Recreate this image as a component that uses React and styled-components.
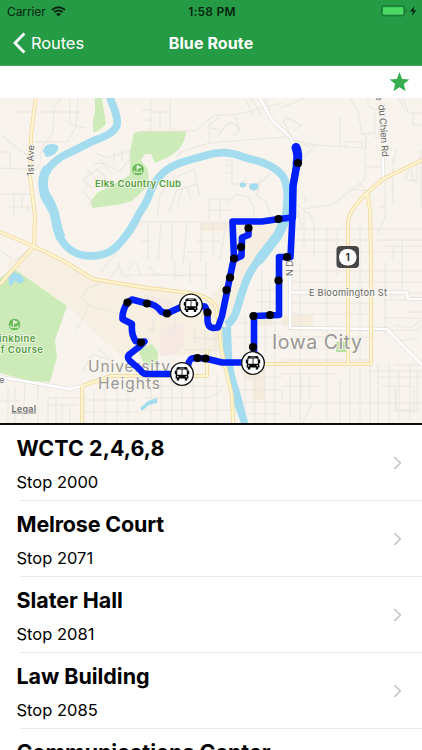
import React from 'react'
import styled, { createGlobalStyle } from 'styled-components'

const GlobalStyle = createGlobalStyle`
    * {
        box-sizing: border-box;
    }
    body {
        margin: 0;
        background-color: #fff;
        font-family: Inter, "Liberation Sans", sans-serif;
        overflow: hidden;
    }
`;

const Container = styled.div`
    width: 422px;
    height: 750px;
    display: flex;
    flex-direction: column;
    overflow: hidden;
    background-color: #fff;
`;

const Header = styled.header`
    height: 66px;
    flex-shrink: 0;
    background-color: #259b46;
    border-bottom: 1px solid #4aa965;
`;

const StatusBar = styled.div`
    height: 22px;
    display: grid;
    grid-template-columns: 1fr auto 1fr;
    align-items: center;
    padding: 0 5px 0 7px;
    font-size: 12px;
    color: #06250f;
`;

const Carrier = styled.div`
    display: flex;
    align-items: center;
    gap: 5px;
    letter-spacing: -0.1px;
`;

const Time = styled.div`
    font-weight: 600;
    letter-spacing: 0.2px;
`;

const Power = styled.div`
    display: flex;
    justify-content: flex-end;
`;

const NavBar = styled.div`
    height: 43px;
    display: grid;
    grid-template-columns: 1fr auto 1fr;
    align-items: center;
    padding-left: 13px;
    padding-right: 13px;
    color: #fff;
`;

const Back = styled.div`
    display: flex;
    align-items: center;
    gap: 5px;
    margin-top: -1px;
    font-size: 16.5px;
    letter-spacing: -0.1px;
`;

const Title = styled.h1`
    margin: -1px 0 0;
    font-size: 16px;
    font-weight: 700;
    letter-spacing: 0.1px;
`;

const Toolbar = styled.div`
    height: 32px;
    flex-shrink: 0;
    display: flex;
    align-items: center;
    justify-content: flex-end;
    padding-right: 12px;
`;

const MapFrame = styled.div`
    height: 327px;
    flex-shrink: 0;
    border-bottom: 2px solid #0c0c0c;
`;

const MapCanvas = styled.svg`
    display: block;
    width: 422px;
    height: 325px;
    font-family: Inter, "Liberation Sans", sans-serif;
`;

const List = styled.div`
    flex: 1;
    overflow: hidden;
`;

const Row = styled.div`
    height: 76px;
    display: flex;
    align-items: center;
    justify-content: space-between;
    margin-left: 20px;
    padding-right: 20px;
    border-bottom: 1px solid #e8e8ea;
`;

const Info = styled.div`
    height: 75px;
    margin-left: -3.5px;
    padding-top: 9px;
`;

const StopName = styled.h2`
    margin: 0;
    font-size: 21.5px;
    line-height: 28px;
    font-weight: 700;
    letter-spacing: ${props => props.$spacing || "-0.05px"};
`;

const StopNumber = styled.div`
    margin-top: 10px;
    font-size: 16.5px;
    line-height: 20px;
    letter-spacing: 0;
`;

const stops = [
    { id: 2000, name: "WCTC 2,4,6,8", spacing: "0.05px" },
    { id: 2071, name: "Melrose Court", spacing: "-0.15px" },
    { id: 2081, name: "Slater Hall" },
    { id: 2085, name: "Law Building" },
    { id: 2090, name: "Communications Center" },
];

const dots = [
    [298, 163], [278.5, 219], [287, 257], [278.5, 280.5], [270, 315], [253.5, 316], [253, 347],
    [248.5, 228], [241, 247], [234, 258.5], [230, 277.5], [226.5, 290], [207.5, 312.5],
    [167, 313.5], [147, 303.5], [127.5, 302.5], [141, 342.5], [197.5, 358], [205.5, 358.5],
];

const buses = [[191, 305.5], [182, 374], [253, 363]];

const localRoads = `
    M12 112H82 M61 98L54 107L53 133L42 147L40 164L34 171 M78 98L76 126L68 142L34 142 M70 98V124L86 128
    M0 168L28 169L33 173 M2 135L18 149L29 156 M0 152H10V167 M0 194H33 M14 194V215 M22 196V210 M9 207H33 M28 202V213
    M88 183L84 192L91 201L88 206 M83 179L98 169L106 177L92 188L83 179 M96 153L106 158L129 151L130 160L119 171L104 163L93 164
    M114 150V166 M122 150V161 M99 159L111 173 M87 170L99 182 M0 250L12 259 M15 262L31 247
    M141 131H195L214 115L234 115L282 103 M151 98V131 M151 112H170 M160 112V130 M170 98V131 M141 120H151 M141 110H150
    M209 143V125L220 117 M209 143L285 137L310 147 M177 157L181 152L209 143 M211 128L222 130L230 122L240 128L233 136 M222 130L217 138 M235 116L240 133
    M245 98L254 116 M251 98L262 116 M265 98L270 113 M226 160H232V184H240L247 179 M226 166H232 M226 173H233
    M246 183L254 185L264 180L270 174 M228 202L236 194L248 197L254 207V218 M262 179L256 195L266 202L270 214
    M157 219L160 195L174 178L194 169L200 197 M169 211L177 190L197 184 M177 206L183 188 M188 188L191 202
    M141 222H226 M209 199V222 M220 199V222 M209 199H230 M209 210H230 M148 222V261 M161 222L158 261 M172 222V261 M187 222L183 265 M201 222V262 M213 222V255
    M197 241H220 M141 241H150 M187 252H208 M226 222L220 261
    M281 108L304 98 M283 121L287 118L301 125L295 130 M283 121L293 140L315 145L304 158 M315 145L366 148 M345 148V142H362V148
    M350 98L358 112L362 134H380V98 M366 134V148 M380 104H385V140 M374 136L391 143 M368 98V106L375 110V132H368
    M365 148V180L333 204L304 209 M340 117V147 M366 167H383 M351 189L367 191L372 198 M358 181L369 193
    M304 203L306 195 M297 205L308 213L314 221V258 M298 212L302 228 M304 212V246
    M282 229H422 M282 240H422 M282 252H422 M300 262V423 M327 228V415 M337 230V275 M360 226V415
    M385 180V217L378 235 M379 207H385 M403 98L408 113H422 M399 98L404 110 M413 112V124L422 126
    M393 157V198 M396 149L394 163 M405 174L412 170V181H417V164 M406 174V180L416 180 M421 150V207
    M393 205L392 183 M383 246H422 M393 246V262 M402 240V293 M385 262V335
    M291 271H422 M291 282H422 M291 303H375 M291 314H375 M291 337H375 M291 349H346 M282 360H370 M282 374H338 M282 386H320
    M282 403H422 M312 403L303 423 M340 380V423 M350 365V423 M360 364V423 M370 364V423 M378 364V423 M389 364V423 M399 371V420 M410 364V420
    M378 377H422 M370 371H422 M381 386H414V410H395V386 M396 390V411H417V371 M382 330H417L422 325 M400 341L419 338 M396 365H422
    M384 300H422 M392 300V293 M402 293H422 M408 312H422 M382 318H422 M395 325L412 328L420 320
    M301 376V398 M309 376V400 M282 390V400 M290 376V418 M327 376V421
    M262 270V314 M270 282V314 M255 302H280 M257 290H278 M238 323H285 M234 337H282 M244 377H282 M235 390H282 M240 402H282 M248 414H282
    M245 316V423 M255 367V423 M265 319V423 M275 319V423
    M8 386V423 M15 386V423 M25 384L23 421 M38 384V423 M0 401H20 M48 398V423 M56 395V423 M48 398H80 M48 405H77 M62 405V423 M70 405V423 M84 395V423 M94 390V423 M105 385V423 M117 380V420 M128 380V420
    M82 400H135 M82 412H140 M115 376H145 M85 290L110 278L121 263 M86 290L81 298L90 306L125 315 M89 303L87 311L76 330
    M82 371L93 354L108 360 M99 349L111 360 M118 262L122 275L130 278 M136 262L141 276
    M141 386H225 M145 398H210L222 390 M151 386V423 M161 380V423 M172 379V423 M182 388V418 M193 375V423 M205 378V423 M217 374V423 M145 410H232
    M205 330V350 M195 327V343 M216 329V365 M191 338H227 M184 350H227 M175 318V330 M153 319V331 M149 266L155 274L184 276 M175 261V281 M190 261V283 M206 261V290
    M100 273L112 258L141 222 M126 275H206 M134 261L128 271 M149 331L156 325 M183 374V386 M205 339H223
`;

// upper river winds down to the bridge, lower river leaves it to the south
const upperRiver = "M109 95L115 111Q119 124 116 127Q113 134 93 141L71 152Q52 160 45 174C40 183 44 191 49 199C57 211 54 222 59 235C65 249 77 256 91 256C107 256 116 249 124 238C134 226 138 214 144 206C151 195 150 185 163 173C174 163 190 160 204 156C218 151 231 152 243 157C256 161 267 162 278 171C287 178 288 190 287 202C286 215 286 224 278 235L259 260C249 271 245 283 240 299C236 313 234 321 226 325";

const BusMarker = ({ x, y }) => (
    <g transform={`translate(${x} ${y})`}>
        <circle r="11.3" fill="#fff" stroke="#111" strokeWidth="1.3" />
        <path d="M-3.8 -7H3.8Q5.4 -7 5.6 -5L6.5 4.6H-6.5L-5.6 -5Q-5.4 -7 -3.8 -7Z" fill="#050505" />
        <path d="M-7.2 -3.5H-6V0.2H-7.2ZM6 -3.5H7.2V0.2H6ZM-5.2 4H-2.8V6.4H-5.2ZM2.8 4H5.2V6.4H2.8Z" fill="#050505" />
        <path d="M-4.5 -4.6H-0.4V0.7H-5ZM0.4 -4.6H4.5L5 0.7H0.4Z" fill="#fff" />
        <path d="M-2.6 -5.9H2.6" stroke="#fff" strokeWidth="0.6" />
        <circle cx="-4.2" cy="2.7" r="0.7" fill="#fff" />
        <circle cx="4.2" cy="2.7" r="0.7" fill="#fff" />
    </g>
)

const GolfPin = ({ x, y }) => (
    <g transform={`translate(${x} ${y})`}>
        <circle r="6.3" fill="#6dbd5c" stroke="#e5f3d8" strokeWidth="0.7" />
        <path d="M-1 2V-4L3 -2.3L-1 -0.7" fill="#e9f6df" stroke="#e9f6df" strokeWidth="0.8" />
        <path d="M-3.8 0.8V2.8H3.5V0.8" fill="none" stroke="#e9f6df" strokeWidth="1" />
    </g>
)

const RouteMap = () => (
    <MapCanvas viewBox="0 98 422 325">
        <rect y="98" width="422" height="325" fill="#f8f4ed" />

        {/* campus and downtown blocks */}
        <path d="M33 246L65 262L95 280L135 288L205 294L222 304L228 323L220 351L175 356L145 350L125 360L67 305L5 266Z" fill="#f6efe2" />
        <path d="M233 223L280 221L284 227L259 260L243 285L236 313L228 323L207 303L230 272Z" fill="#f6eee1" />
        <path d="M201 223H229V231H201ZM282 315H313V326H282ZM255 365H265V400H252V380H245V365ZM255 318H272V326H255Z" fill="#f5ecdd" />
        <path d="M168 325H184V346L177 354L160 356V330ZM145 295L170 300L179 310L160 318L148 307Z" fill="#f6e8e3" />

        {/* parks */}
        <path d="M95 98H102L106 124L98 131L93 132V120L95 112Z" fill="#cdebb9" />
        <path d="M141 131H186C185 146 176 154 162 160L155 163L151 154L145 154L141 160L148 170L149 185L132 201L122 204L92 208L91 201L97 193L118 182L130 175V151L134 133Z" fill="#cdebb9" />
        <path d="M13 268L67 306L55 340L57 357L50 382L30 381L0 373V278Z" fill="#cdebb9" />
        <path d="M336 342H346V352H336Z" fill="#b7e0a0" />
        <path d="M138 349L152 344L158 352L157 365L145 368Z" fill="#cdebb9" />

        <path d={localRoads} fill="none" stroke="#eae6e0" strokeWidth="1.1" />

        {/* water */}
        <path d={upperRiver} fill="none" stroke="#a4dcef" strokeWidth="7.8" strokeLinejoin="round" />
        <path d="M48 168Q40 178 45 196L54 212L58 230L61 238" fill="none" stroke="#a4dcef" strokeWidth="9.5" />
        <path d="M284 222L278 235L259 260" fill="none" stroke="#a4dcef" strokeWidth="10" strokeLinecap="round" />
        <path d="M222 327H231L232 355Q233 372 240 392L249 426H242L231 396L224 365Z" fill="#a4dcef" />
        <path d="M43 151Q45 143 52 144Q60 144 58 150Q54 157 46 157Z" fill="#a4dcef" />
        <ellipse cx="243" cy="185" rx="3.3" ry="2.5" fill="#a4dcef" />
        <path d="M249 186L252 183L258 184L258.5 188L254 191L250 189Z" fill="#a4dcef" />
        <path d="M12 267L15 273L20 274L25 280L20 284L15 281L10 287L8 277Z" fill="#a4dcef" />
        <path d="M140 408L148 401L157 398L157 403L149 405L142 411Z" fill="#a4dcef" />

        {/* white arterials */}
        <g fill="none" stroke="#dedbd6" strokeWidth="3.8">
            <path d="M259 97L272 120L290 137L296 149" />
            <path d="M383 150V180" />
            <path d="M290 262V328L387 329L422 365" />
            <path d="M0 377L70 389L82 386" />
            <path d="M290 292.5H407L408 299H422" />
        </g>
        <g fill="none" stroke="#fff" strokeWidth="2.7">
            <path d="M259 97L272 120L290 137L296 149" />
            <path d="M383 150V180" />
            <path d="M290 262V328L387 329L422 365" />
            <path d="M0 377L70 389L82 386" />
            <path d="M290 292.5H407L408 299H422" />
        </g>

        {/* highways */}
        <g fill="none" stroke="#f1dca3" strokeWidth="4" strokeLinejoin="round">
            <path d="M36 96L31 135L30 176L35 216L34 246L0 284" />
            <path d="M0 232L33 246L62 260L93 279L141 287L190 293Q213 297 217 310L221 348L232 396L233 423" />
            <path d="M422 160L383 179L367 193Q348 211 348 223V364" />
            <path d="M367 193L370 210L371 262V364H262" />
            <path d="M82 386V423M82 386L111 376H207V350" />
        </g>
        <g fill="none" stroke="#fff5d2" strokeWidth="2.2" strokeLinejoin="round">
            <path d="M36 96L31 135L30 176L35 216L34 246L0 284" />
            <path d="M0 232L33 246L62 260L93 279L141 287L190 293Q213 297 217 310L221 348L232 396L233 423" />
            <path d="M422 160L383 179L367 193Q348 211 348 223V364" />
            <path d="M367 193L370 210L371 262V364H262" />
            <path d="M82 386V423M82 386L111 376H207V350" />
        </g>

        {/* place names */}
        <g stroke="#faf7f1" strokeWidth="1.6" paintOrder="stroke" strokeLinejoin="round">
            <g fill="#999793">
                <text x="88" y="371.5" fontSize="15.5" textLength="82">University</text>
                <text x="98" y="388.5" fontSize="15.5" textLength="62">Heights</text>
                <text x="272" y="348.5" fontSize="19.5" textLength="90">Iowa City</text>
            </g>
            <g fill="#676767">
                <text x="309" y="295.5" fontSize="9.3" textLength="78">E Bloomington St</text>
                <text transform="translate(33.5 176) rotate(-89)" fontSize="9.3" textLength="31">1st Ave</text>
                <text transform="translate(293 276) rotate(-90)" fontSize="9">N D</text>
                <text transform="translate(375.5 96) rotate(75)" fontSize="9.3">e</text>
                <text transform="translate(378.5 105) rotate(86)" fontSize="9.3" textLength="52">du Chien Rd</text>
                <text x="-1" y="382.5" fontSize="9">e</text>
            </g>
            <g fill="#509f3b" fontSize="9.6" fontWeight="600">
                <text x="95" y="186.5" textLength="86">Elks Country Club</text>
                <text x="-1" y="342" textLength="36.5">inkbine</text>
                <text x="-2" y="352.5" textLength="45">lf Course</text>
            </g>
        </g>
        <text x="11.5" y="411.5" fontSize="9" fontWeight="600" fill="#737373" textDecoration="underline" textLength="24.5">Legal</text>
        <GolfPin x={138} y={169.5} />
        <GolfPin x={14.5} y={324.5} />

        {/* route 1 shield */}
        <rect x="336.5" y="246" width="22.5" height="22" rx="4" fill="#464646" />
        <rect x="339" y="249" width="17.5" height="16.5" rx="8" fill="#fff" />
        <text x="347.7" y="261" fontSize="10" fontWeight="700" textAnchor="middle" fill="#333">1</text>

        {/* blue route */}
        <g fill="none" stroke="#0020fb" strokeWidth="6.6" strokeLinejoin="round" strokeLinecap="round">
            <path d="M296 147L298 156L293 186L292.5 217L290.5 257L279 257V315L254 316V363" />
            <path strokeWidth="9" d="M296 147.5Q299 155 297 164" />
            <path strokeWidth="7.4" d="M297 164L293 186L292.5 217" />
            <path d="M292 217.5L279 219L262 221.5L232.5 221.5L234 258L230 277L222 316L218 327.5L213 328Q207.500 327 207.500 320V312L205 306.500L191 305L181 307L167 313.500L161 311.500Q156 304 147 303.500L132 299.500L127.500 302.500Q122 311 122.500 319L132 324Q131 334 135.500 341L141 342.500L144.500 341.500Q140 347 135 350L130 354Q126 357 130 361L140 369.500Q142 373.500 146 374L182 374L188 366Q189 358 194 358L205.500 358.500L222 362.500H253" />
            <path d="M248.5 229V235L242 237.500L241.500 256L235 259" />
        </g>
        {dots.map(([x, y]) => (
            <circle key={`${x}-${y}`} cx={x} cy={y} r="4.1" fill="#000" />
        ))}
        {buses.map(([x, y]) => (
            <BusMarker key={`${x}-${y}`} x={x} y={y} />
        ))}
    </MapCanvas>
)

const App = () => {
  return (
    <Container>
        <GlobalStyle />
        <Header>
            <StatusBar>
                <Carrier>
                    Carrier
                    <svg width="15" height="11" viewBox="0 0 15 11">
                        <path d="M1 4Q7.5 -1.5 14 4M3.3 6.3Q7.5 2.8 11.7 6.3" fill="none" stroke="#06250f" strokeWidth="1.9" />
                        <path d="M5 8.1Q7.5 6 10 8.1L7.5 10.6Z" fill="#06250f" />
                    </svg>
                </Carrier>
                <Time>1:58 PM</Time>
                <Power>
                    <svg width="36" height="12" viewBox="0 0 36 12">
                        <rect x="0.6" y="0.8" width="23" height="10" rx="2" fill="none" stroke="#16702f" strokeWidth="1" />
                        <rect x="2" y="2.2" width="20.2" height="7.2" rx="1" fill="#4bd763" />
                        <path d="M25 4Q27 5.8 25 7.6Z" fill="#16702f" />
                        <path d="M33.5 1L29 6.5H32L30.8 11L35.3 5.2H32.4Z" fill="#06250f" />
                    </svg>
                </Power>
            </StatusBar>
            <NavBar>
                <Back>
                    <svg width="13" height="22" viewBox="0 0 13 22">
                        <path d="M11.4 1.6L2 11L11.4 20.4" fill="none" stroke="#fff" strokeWidth="2.8" />
                    </svg>
                    Routes
                </Back>
                <Title>Blue Route</Title>
            </NavBar>
        </Header>
        <Toolbar>
            <svg width="21" height="20" viewBox="0 0 21 20">
                <path d="M10.5 0L13.2 6.9L20.4 7.4L14.8 12L16.6 19.2L10.5 15.3L4.4 19.2L6.2 12L0.6 7.4L7.8 6.9Z" fill="#37ae4f" />
            </svg>
        </Toolbar>
        <MapFrame>
            <RouteMap />
        </MapFrame>
        <List>
            {stops.map((stop) => (
                <Row key={stop.id}>
                    <Info>
                        <StopName $spacing={stop.spacing}>{stop.name}</StopName>
                        <StopNumber>Stop {stop.id}</StopNumber>
                    </Info>
                    <svg width="9" height="14" viewBox="0 0 9 14">
                        <path d="M1.3 1L7.3 7L1.3 13" fill="none" stroke="#c5c5ca" strokeWidth="1.7" />
                    </svg>
                </Row>
            ))}
        </List>
    </Container>
  )
}

export default App
